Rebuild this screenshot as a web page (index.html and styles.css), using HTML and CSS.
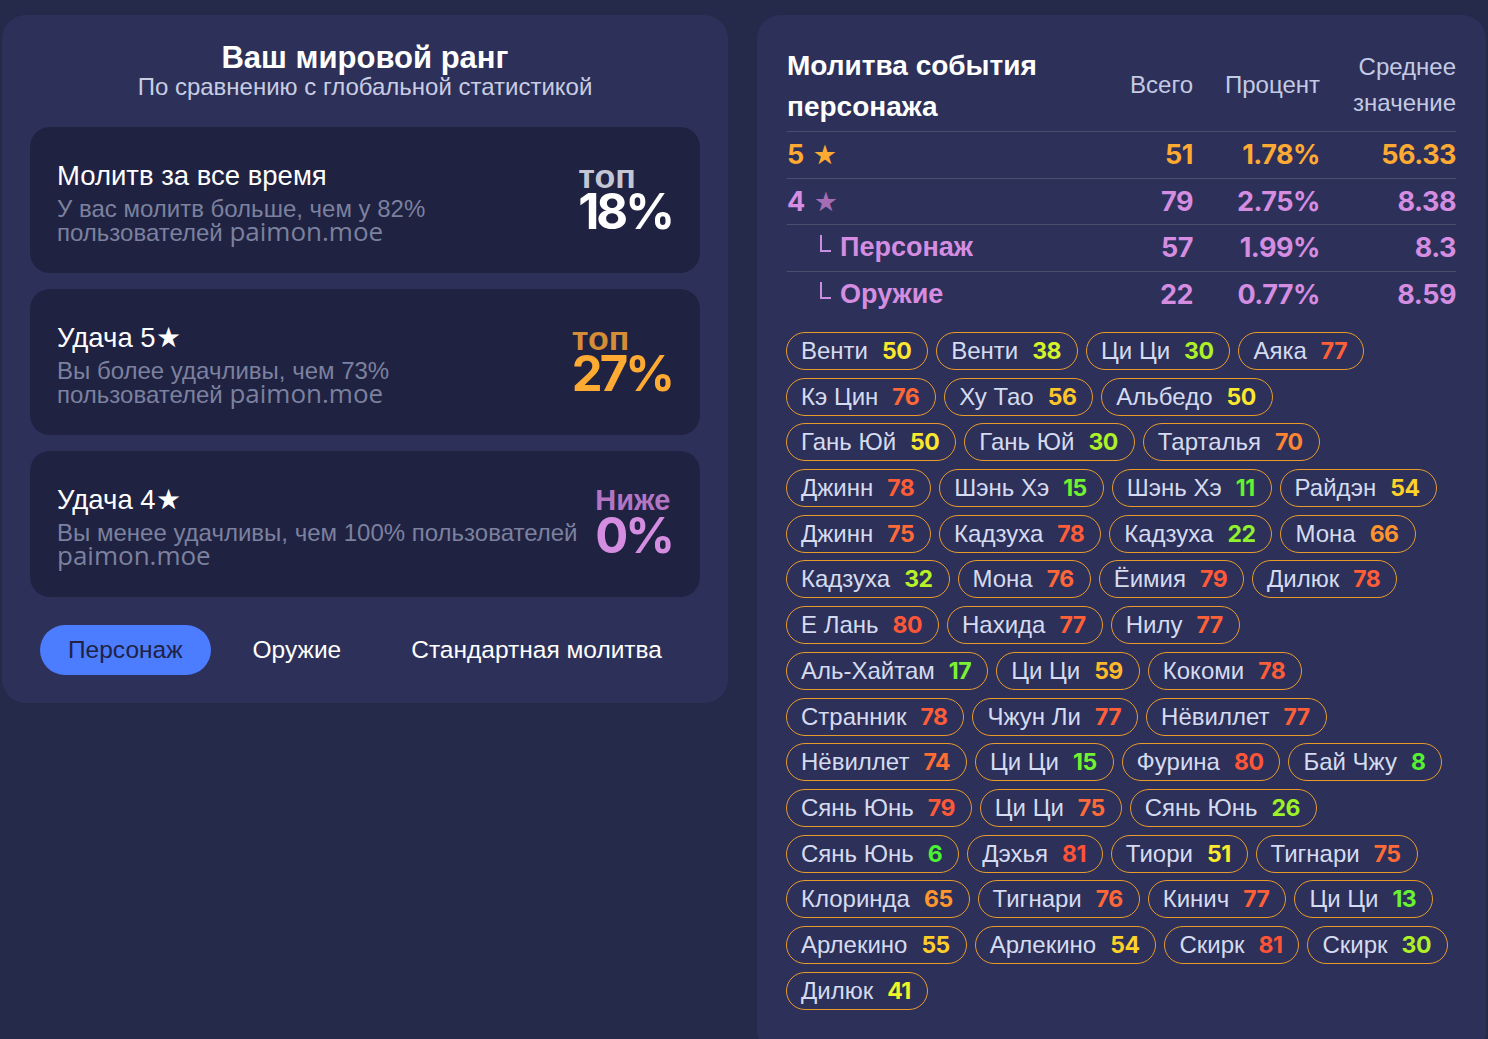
FILE: index.html
```html
<!DOCTYPE html>
<html lang="ru">
<head>
<meta charset="utf-8">
<title>Ваш мировой ранг</title>
<link rel="stylesheet" href="styles.css">
</head>
<body>
<div class="page">
  <section class="panel rank-panel">
    <header class="rank-head">
      <h2 class="rank-heading">Ваш мировой ранг</h2>
      <p class="rank-sub">По сравнению с глобальной статистикой</p>
    </header>

    <div class="rank-card">
      <div class="rank-info">
        <div class="rank-title">Молитв за все время</div>
        <div class="rank-desc">У вас молитв больше, чем у 82%<br>пользователей <span class="latin">paimon.moe</span></div>
      </div>
      <div class="rank-value neutral">
        <span class="rank-label">топ</span>
        <span class="rank-pct">18%</span>
      </div>
    </div>

    <div class="rank-card">
      <div class="rank-info">
        <div class="rank-title">Удача 5★</div>
        <div class="rank-desc">Вы более удачливы, чем 73%<br>пользователей <span class="latin">paimon.moe</span></div>
      </div>
      <div class="rank-value gold">
        <span class="rank-label">топ</span>
        <span class="rank-pct">27%</span>
      </div>
    </div>

    <div class="rank-card">
      <div class="rank-info">
        <div class="rank-title">Удача 4★</div>
        <div class="rank-desc">Вы менее удачливы, чем 100% пользователей<br><span class="latin">paimon.moe</span></div>
      </div>
      <div class="rank-value purple">
        <span class="rank-label">Ниже</span>
        <span class="rank-pct">0%</span>
      </div>
    </div>

    <nav class="tabs">
      <button class="tab active">Персонаж</button>
      <button class="tab">Оружие</button>
      <button class="tab">Стандартная молитва</button>
    </nav>
  </section>

  <section class="panel stats-panel">
    <div class="stats-table">
      <div class="th th-title">Молитва события персонажа</div>
      <div class="th">Всего</div>
      <div class="th">Процент</div>
      <div class="th">Среднее значение</div>

      <div class="td td-label five"><span class="num">5</span><span class="star">★</span></div>
      <div class="td num five">51</div>
      <div class="td num five">1.78%</div>
      <div class="td num five">56.33</div>

      <div class="td td-label four"><span class="num">4</span><span class="star">★</span></div>
      <div class="td num four">79</div>
      <div class="td num four">2.75%</div>
      <div class="td num four">8.38</div>

      <div class="td td-label four sub"><span class="branch"></span>Персонаж</div>
      <div class="td num four">57</div>
      <div class="td num four">1.99%</div>
      <div class="td num four">8.3</div>

      <div class="td td-label four sub"><span class="branch"></span>Оружие</div>
      <div class="td num four">22</div>
      <div class="td num four">0.77%</div>
      <div class="td num four">8.59</div>
    </div>

    <div class="banners">
      <div class="banner">
        <span class="pill">Венти<b style="color:hsl(54,97%,58%)">50</b></span>
        <span class="pill">Венти<b style="color:hsl(69,90%,56%)">38</b></span>
        <span class="pill">Ци Ци<b style="color:hsl(80,88%,55%)">30</b></span>
        <span class="pill">Аяка<b style="color:hsl(12,100%,61%)">77</b></span>
      </div>
      <div class="banner">
        <span class="pill">Кэ Цин<b style="color:hsl(14,100%,61%)">76</b></span>
        <span class="pill">Ху Тао<b style="color:hsl(44,100%,58%)">56</b></span>
        <span class="pill">Альбедо<b style="color:hsl(54,97%,58%)">50</b></span>
      </div>
      <div class="banner">
        <span class="pill">Гань Юй<b style="color:hsl(54,97%,58%)">50</b></span>
        <span class="pill">Гань Юй<b style="color:hsl(80,88%,55%)">30</b></span>
        <span class="pill">Тарталья<b style="color:hsl(24,100%,60%)">70</b></span>
      </div>
      <div class="banner">
        <span class="pill">Джинн<b style="color:hsl(11,100%,61%)">78</b></span>
        <span class="pill">Шэнь Хэ<b style="color:hsl(100,88%,57%)">15</b></span>
        <span class="pill">Шэнь Хэ<b style="color:hsl(105,88%,57%)">11</b></span>
        <span class="pill">Райдэн<b style="color:hsl(47,100%,58%)">54</b></span>
      </div>
      <div class="banner">
        <span class="pill">Джинн<b style="color:hsl(15,100%,61%)">75</b></span>
        <span class="pill">Кадзуха<b style="color:hsl(11,100%,61%)">78</b></span>
        <span class="pill">Кадзуха<b style="color:hsl(90,88%,56%)">22</b></span>
        <span class="pill">Мона<b style="color:hsl(29,100%,59%)">66</b></span>
      </div>
      <div class="banner">
        <span class="pill">Кадзуха<b style="color:hsl(77,88%,55%)">32</b></span>
        <span class="pill">Мона<b style="color:hsl(14,100%,61%)">76</b></span>
        <span class="pill">Ёимия<b style="color:hsl(10,100%,61%)">79</b></span>
        <span class="pill">Дилюк<b style="color:hsl(11,100%,61%)">78</b></span>
      </div>
      <div class="banner">
        <span class="pill">Е Лань<b style="color:hsl(9,100%,61%)">80</b></span>
        <span class="pill">Нахида<b style="color:hsl(12,100%,61%)">77</b></span>
        <span class="pill">Нилу<b style="color:hsl(12,100%,61%)">77</b></span>
      </div>
      <div class="banner">
        <span class="pill">Аль-Хайтам<b style="color:hsl(97,88%,57%)">17</b></span>
        <span class="pill">Ци Ци<b style="color:hsl(40,100%,58%)">59</b></span>
        <span class="pill">Кокоми<b style="color:hsl(11,100%,61%)">78</b></span>
      </div>
      <div class="banner">
        <span class="pill">Странник<b style="color:hsl(11,100%,61%)">78</b></span>
        <span class="pill">Чжун Ли<b style="color:hsl(12,100%,61%)">77</b></span>
        <span class="pill">Нёвиллет<b style="color:hsl(12,100%,61%)">77</b></span>
      </div>
      <div class="banner">
        <span class="pill">Нёвиллет<b style="color:hsl(17,100%,60%)">74</b></span>
        <span class="pill">Ци Ци<b style="color:hsl(100,88%,57%)">15</b></span>
        <span class="pill">Фурина<b style="color:hsl(9,100%,61%)">80</b></span>
        <span class="pill">Бай Чжу<b style="color:hsl(109,88%,57%)">8</b></span>
      </div>
      <div class="banner">
        <span class="pill">Сянь Юнь<b style="color:hsl(10,100%,61%)">79</b></span>
        <span class="pill">Ци Ци<b style="color:hsl(15,100%,61%)">75</b></span>
        <span class="pill">Сянь Юнь<b style="color:hsl(85,88%,55%)">26</b></span>
      </div>
      <div class="banner">
        <span class="pill">Сянь Юнь<b style="color:hsl(112,88%,57%)">6</b></span>
        <span class="pill">Дэхья<b style="color:hsl(8,100%,61%)">81</b></span>
        <span class="pill">Тиори<b style="color:hsl(55,97%,58%)">51</b></span>
        <span class="pill">Тигнари<b style="color:hsl(15,100%,61%)">75</b></span>
      </div>
      <div class="banner">
        <span class="pill">Клоринда<b style="color:hsl(30,100%,59%)">65</b></span>
        <span class="pill">Тигнари<b style="color:hsl(14,100%,61%)">76</b></span>
        <span class="pill">Кинич<b style="color:hsl(12,100%,61%)">77</b></span>
        <span class="pill">Ци Ци<b style="color:hsl(103,88%,57%)">13</b></span>
      </div>
      <div class="banner">
        <span class="pill">Арлекино<b style="color:hsl(46,100%,58%)">55</b></span>
        <span class="pill">Арлекино<b style="color:hsl(47,100%,58%)">54</b></span>
        <span class="pill">Скирк<b style="color:hsl(8,100%,61%)">81</b></span>
        <span class="pill">Скирк<b style="color:hsl(80,88%,55%)">30</b></span>
      </div>
      <div class="banner">
        <span class="pill">Дилюк<b style="color:hsl(62,92%,56%)">41</b></span>
      </div>
    </div>
  </section>
</div>
</body>
</html>
```

FILE: styles.css
```css
* {
  box-sizing: border-box;
}

html, body {
  margin: 0;
  background: #25294a;
}

body {
  font-family: "Liberation Sans", Arial, sans-serif;
  color: #ffffff;
  height: 1039px;
  overflow: hidden;
}

.page {
  display: grid;
  grid-template-columns: 726px 729px;
  column-gap: 29px;
  align-items: start;
  padding: 15px 2px 0 2px;
}

.panel {
  background: #2d3159;
  border-radius: 24px;
}

/* ---------- left panel ---------- */

.rank-panel {
  padding: 25px 28px 28px 28px;
  display: flex;
  flex-direction: column;
  gap: 16px;
}

.rank-head {
  text-align: center;
  margin-bottom: 12px;
}

.rank-heading {
  margin: 0;
  font-size: 31px;
  font-weight: 700;
  line-height: 35px;
}

.rank-sub {
  margin: 0;
  font-size: 24px;
  line-height: 24px;
  color: #c9cde3;
}

.rank-card {
  background: #202242;
  border-radius: 20px;
  min-height: 146px;
  padding: 14px 28px 14px 27px;
  display: flex;
  align-items: center;
  gap: 12px;
}

.rank-info {
  flex: 1;
  min-width: 0;
  margin-top: 4px;
}

.rank-title {
  font-size: 27.5px;
  line-height: 32px;
  margin-bottom: 5px;
  color: #ffffff;
}

.rank-desc {
  font-size: 24px;
  line-height: 24px;
  color: #7b819e;
  white-space: nowrap;
}

.latin {
  font-family: "Open Sans", "Liberation Sans", sans-serif;
  font-size: 26px;
  line-height: 20px;
}

.rank-value {
  display: flex;
  flex-direction: column;
  align-items: flex-start;
  font-weight: 700;
}

.rank-label {
  font-size: 34px;
  line-height: 22px;
}

.purple .rank-label {
  font-size: 29px;
}

.rank-pct {
  font-family: "Inter", "Liberation Sans", sans-serif;
  font-size: 49px;
  line-height: 46px;
  letter-spacing: -3px;
  margin-top: 2px;
}

.neutral .rank-label { color: #c4c6d3; }
.neutral .rank-pct { color: #ffffff; }
.gold .rank-label { color: #d68e36; }
.gold .rank-pct { color: #ffaa33; }
.purple .rank-label { color: #b275c2; }
.purple .rank-pct { color: #d48de0; }

.tabs {
  display: flex;
  gap: 14px;
  margin: 12px 0 0 10px;
}

.tab {
  font-family: "Liberation Sans", Arial, sans-serif;
  font-size: 24.5px;
  height: 50px;
  padding: 0 28px;
  border: 0;
  border-radius: 25px;
  background: transparent;
  color: #ffffff;
}

.tab.active {
  background: #4c7cff;
  color: #1f2243;
}

/* ---------- right panel ---------- */

.stats-panel {
  padding: 30px 30px 30px 30px;
  min-height: 1040px;
}

.stats-table {
  display: grid;
  grid-template-columns: 1fr 103px 127px 136px;
}

.th {
  font-size: 24px;
  line-height: 36px;
  color: #c4cae4;
  text-align: right;
  align-self: center;
  padding: 0 0 6px 20px;
}

.th-title {
  text-align: left;
  color: #ffffff;
  font-weight: 700;
  font-size: 28px;
  line-height: 41px;
  padding: 0 40px 4px 0;
}

.td {
  border-top: 1px solid #4a4f70;
  height: 46.5px;
  display: flex;
  align-items: center;
  justify-content: flex-end;
  font-size: 27px;
  font-weight: 700;
}

.td-label {
  justify-content: flex-start;
}

.num {
  font-family: "Inter", "Liberation Sans", sans-serif;
  letter-spacing: -0.5px;
}

.five { color: #ffaa33; }
.four { color: #d48de0; }

.star {
  font-family: "DejaVu Sans", sans-serif;
  font-size: 27px;
  margin-left: 9px;
}

.four .star { color: #a46db6; }

.sub {
  padding-left: 33px;
}

.branch {
  display: inline-block;
  width: 11px;
  height: 17px;
  border-left: 2px solid #c98ee0;
  border-bottom: 2px solid #c98ee0;
  margin-right: 9px;
  margin-top: -8px;
}

.banners {
  margin-top: 15px;
  margin-left: -1px;
  display: flex;
  flex-direction: column;
  row-gap: 7.7px;
}

.banner {
  display: flex;
  flex-wrap: wrap;
  gap: 8px;
}

.pill {
  display: inline-flex;
  align-items: center;
  height: 38px;
  padding: 0 16px 0 14px;
  border: 1px solid #e89a2c;
  border-radius: 19px;
  font-size: 24px;
  color: #d5dbf0;
  white-space: nowrap;
}

.pill b {
  font-family: "Inter", "Liberation Sans", sans-serif;
  font-weight: 700;
  font-size: 23px;
  margin-left: 14px;
  letter-spacing: -0.5px;
}
```
